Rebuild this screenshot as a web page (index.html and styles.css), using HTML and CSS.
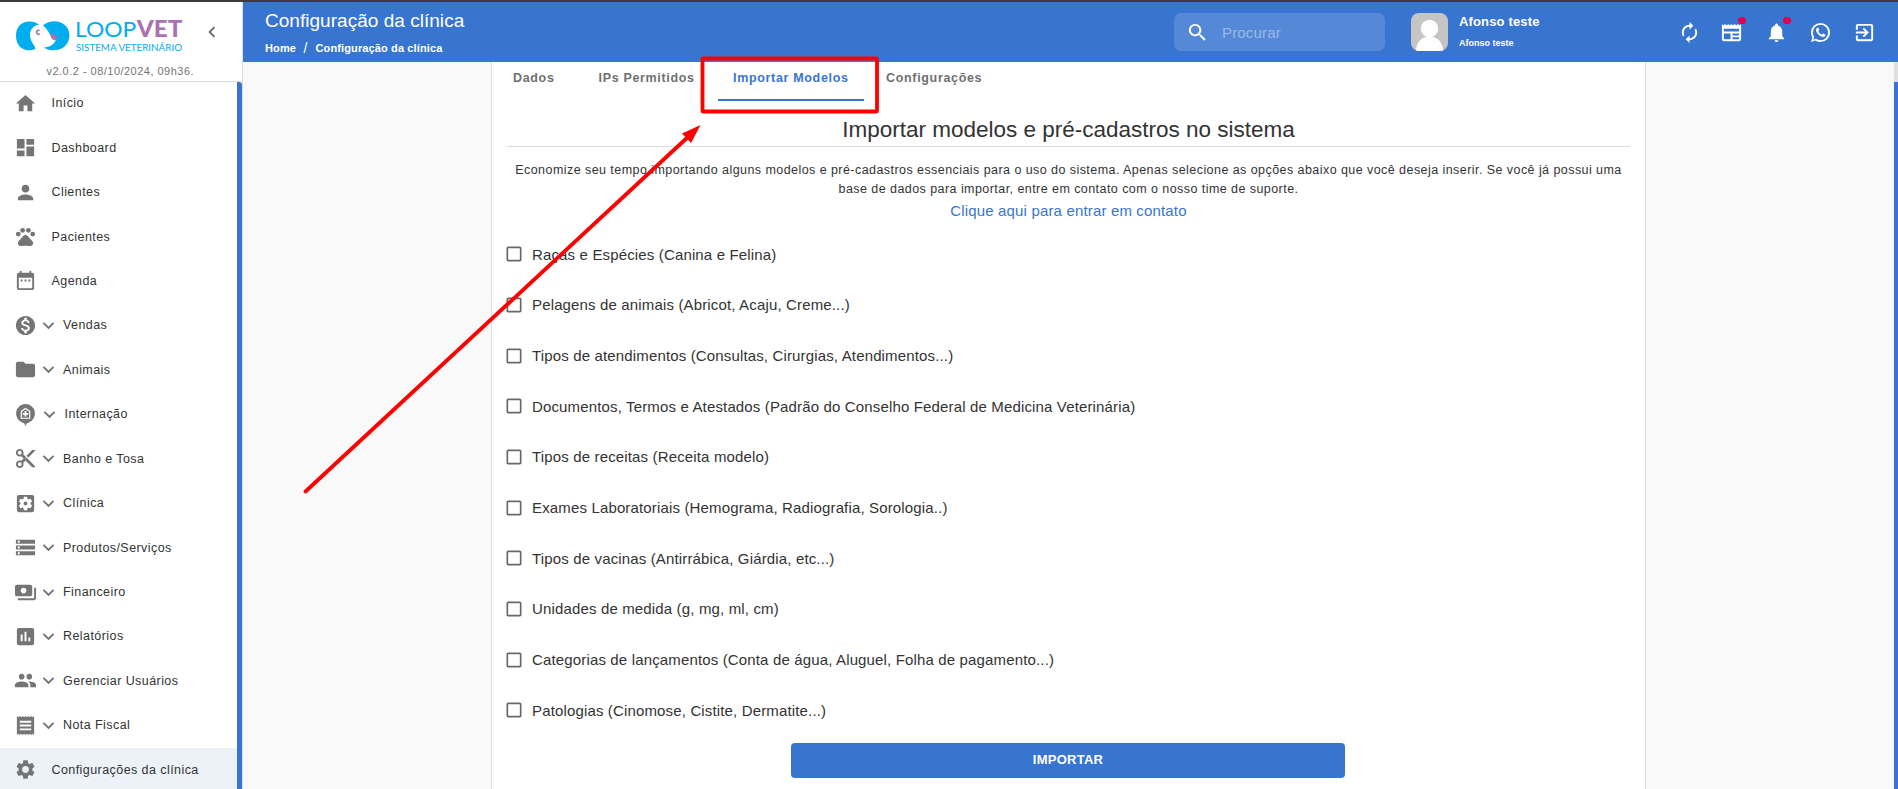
FILE: index.html
```html
<!DOCTYPE html>
<html lang="pt-BR">
<head>
<meta charset="utf-8">
<title>Configuração da clínica</title>
<link rel="stylesheet" href="styles.css">
</head>
<body>
<svg class="sprite" aria-hidden="true">
  <symbol id="chev" viewBox="0 0 24 24"><path d="M16.59 8.59 12 13.17 7.41 8.59 6 10l6 6 6-6z"/></symbol>
  <symbol id="check" viewBox="0 0 24 24"><path d="M19 5v14H5V5h14m0-2H5c-1.1 0-2 .9-2 2v14c0 1.1.9 2 2 2h14c1.1 0 2-.9 2-2V5c0-1.1-.9-2-2-2z"/></symbol>
</svg>
<div class="app">
  <aside class="sidebar">
    <div class="brand">
      <div class="brand-row">
        <svg class="logo" viewBox="48 30 504 135">
          <path fill="#00aeef" d="M118 74C98 57 48 59 48 107c0 41 36 50 58 40 2-8-14-19-16-40-1-18 10-32 28-33z"/>
          <path fill="#00aeef" d="M129 76c15-12 34-15 49-10 24 8 32 27 30 46-3 28-28 40-50 39-12-1-21-4-26-9 16 0 32-9 35-22-15-3-16-24-38-44z"/>
          <path fill="#aa72b0" d="M149 101c9 5 17 0 22 7 2 6-2 12-8 13-7-2-11-10-14-20z"/>
          <path fill="none" stroke="#aa72b0" stroke-width="5" d="M119 92c-4-3-9 0-9 5s5 8 9 4"/>
          <text class="logo-loop" x="225" y="112" textLength="184" lengthAdjust="spacingAndGlyphs">LOOP</text>
          <text class="logo-vet" x="410" y="112" textLength="137" lengthAdjust="spacingAndGlyphs">VET</text>
          <text class="logo-sub" x="228" y="153" textLength="318" lengthAdjust="spacingAndGlyphs">SISTEMA VETERINÁRIO</text>
        </svg>
        <svg class="collapse" viewBox="0 0 24 24"><path d="M15.41 7.41 14 6l-6 6 6 6 1.41-1.41L10.83 12z"/></svg>
      </div>
      <div class="version">v2.0.2 - 08/10/2024, 09h36.</div>
    </div>
    <nav class="menu">
      <a class="item"><svg class="ic" viewBox="0 0 24 24"><path d="M10 20v-6h4v6h5v-8h3L12 3 2 12h3v8z"/></svg><span class="label">Início</span></a>
      <a class="item"><svg class="ic" viewBox="0 0 24 24"><path d="M3 13h8V3H3v10zm0 8h8v-6H3v6zm10 0h8V11h-8v10zm0-18v6h8V3h-8z"/></svg><span class="label">Dashboard</span></a>
      <a class="item"><svg class="ic" viewBox="0 0 24 24"><path d="M12 12c2.21 0 4-1.79 4-4s-1.79-4-4-4-4 1.79-4 4 1.79 4 4 4zm0 2c-2.67 0-8 1.34-8 4v2h16v-2c0-2.66-5.33-4-8-4z"/></svg><span class="label">Clientes</span></a>
      <a class="item"><svg class="ic" viewBox="0 0 24 24"><circle cx="4.5" cy="9.5" r="2.5"/><circle cx="9" cy="5.5" r="2.5"/><circle cx="15" cy="5.5" r="2.5"/><circle cx="19.5" cy="9.5" r="2.5"/><path d="M17.34 14.86c-.87-1.02-1.6-1.89-2.48-2.91-.46-.54-1.05-1.08-1.75-1.32-.11-.04-.22-.07-.33-.09-.25-.04-.52-.04-.78-.04s-.53 0-.79.05c-.11.02-.22.05-.33.09-.7.24-1.28.78-1.75 1.32-.87 1.02-1.6 1.89-2.48 2.91-1.31 1.31-2.92 2.76-2.62 4.79.29 1.02 1.02 2.03 2.33 2.32.73.15 3.06-.44 5.54-.44h.18c2.48 0 4.81.58 5.54.44 1.31-.29 2.04-1.31 2.33-2.32.31-2.04-1.3-3.49-2.61-4.8z"/></svg><span class="label">Pacientes</span></a>
      <a class="item"><svg class="ic" viewBox="0 0 24 24"><path d="M9 11H7v2h2v-2zm4 0h-2v2h2v-2zm4 0h-2v2h2v-2zm2-7h-1V2h-2v2H8V2H6v2H5c-1.11 0-1.99.9-1.99 2L3 20c0 1.1.89 2 2 2h14c1.1 0 2-.9 2-2V6c0-1.1-.9-2-2-2zm0 16H5V9h14v11z"/></svg><span class="label">Agenda</span></a>
      <a class="item group"><svg class="ic" viewBox="0 0 24 24"><path d="M12 2C6.48 2 2 6.48 2 12s4.48 10 10 10 10-4.48 10-10S17.52 2 12 2zm1.41 16.09V20h-2.67v-1.93c-1.71-.36-3.16-1.46-3.27-3.4h1.96c.1 1.05.82 1.87 2.65 1.87 1.96 0 2.4-.98 2.4-1.59 0-.83-.44-1.61-2.67-2.14-2.48-.6-4.18-1.62-4.18-3.67 0-1.72 1.39-2.84 3.11-3.21V4h2.67v1.95c1.86.45 2.79 1.86 2.85 3.39H14.3c-.05-1.11-.64-1.87-2.22-1.87-1.5 0-2.4.68-2.4 1.64 0 .84.65 1.39 2.67 1.91s4.18 1.39 4.18 3.91c-.01 1.83-1.38 2.83-3.12 3.16z"/></svg><svg class="chev"><use href="#chev"/></svg><span class="label">Vendas</span></a>
      <a class="item group"><svg class="ic" viewBox="0 0 24 24"><path d="M10 4H4c-1.1 0-1.99.9-1.99 2L2 18c0 1.1.9 2 2 2h16c1.1 0 2-.9 2-2V8c0-1.1-.9-2-2-2h-8l-2-2z"/></svg><svg class="chev"><use href="#chev"/></svg><span class="label">Animais</span></a>
      <a class="item group wide"><svg class="ic" viewBox="0 0 24 24"><path fill-rule="evenodd" d="M12 1a10 10 0 0 0-3 19.5l1.6.6L12 24l1.4-2.9 1.6-.6A10 10 0 0 0 12 1zM7 8.400 12 5l5 3.400V16.500H7z"/><path d="M8.200 9 12 6.400 15.800 9v6.300H8.200z"/><path fill="#fff" d="M11.100 8.400h1.800v2h2v1.800h-2v2h-1.800v-2h-2v-1.800h2z"/></svg><svg class="chev"><use href="#chev"/></svg><span class="label">Internação</span></a>
      <a class="item group"><svg class="ic" viewBox="0 0 24 24"><path d="M9.64 7.64c.23-.5.36-1.05.36-1.64 0-2.21-1.79-4-4-4S2 3.790 2 6s1.790 4 4 4c.59 0 1.140-.13 1.640-.36L10 12l-2.360 2.360C7.140 14.130 6.590 14 6 14c-2.210 0-4 1.790-4 4s1.790 4 4 4 4-1.790 4-4c0-.59-.13-1.140-.36-1.640L12 14l7 7h3v-1L9.640 7.640zM6 8c-1.100 0-2-.89-2-2s.9-2 2-2 2 .89 2 2-.9 2-2 2zm0 12c-1.100 0-2-.89-2-2s.9-2 2-2 2 .89 2 2-.9 2-2 2zm6-7.500c-.28 0-.5-.22-.5-.5s.22-.5.5-.5.5.22.5.5-.22.5-.5.5zM19 3l-6 6 2 2 7-7V3z"/></svg><svg class="chev"><use href="#chev"/></svg><span class="label">Banho e Tosa</span></a>
      <a class="item group"><svg class="ic" viewBox="0 0 24 24"><path d="M12 10c-1.100 0-2 .9-2 2s.9 2 2 2 2-.9 2-2-.9-2-2-2zm7-7H5c-1.110 0-2 .9-2 2v14c0 1.100.89 2 2 2h14c1.110 0 2-.9 2-2V5c0-1.100-.89-2-2-2zm-1.750 9c0 .23-.02.46-.05.68l1.480 1.160c.13.11.17.3.08.45l-1.400 2.420c-.09.15-.27.21-.43.15l-1.740-.7c-.36.28-.76.51-1.180.69l-.26 1.850c-.03.17-.18.3-.35.3h-2.800c-.17 0-.32-.13-.35-.29l-.26-1.850c-.43-.18-.82-.41-1.180-.69l-1.740.7c-.16.06-.34 0-.43-.15l-1.400-2.420c-.09-.15-.05-.34.08-.45l1.480-1.160c-.03-.23-.05-.46-.05-.69 0-.23.02-.46.05-.68l-1.480-1.160c-.13-.11-.17-.3-.08-.45l1.400-2.420c.09-.15.27-.21.43-.15l1.740.7c.36-.28.76-.51 1.180-.69l.26-1.850c.03-.17.18-.3.35-.3h2.800c.17 0 .32.13.35.29l.26 1.850c.43.18.82.41 1.180.69l1.740-.7c.16-.06.34 0 .43.15l1.400 2.420c.09.15.05.34-.08.45l-1.480 1.160c.03.23.05.46.05.69z"/></svg><svg class="chev"><use href="#chev"/></svg><span class="label">Clínica</span></a>
      <a class="item group"><svg class="ic" viewBox="0 0 24 24"><path d="M2 20h20v-4H2v4zm2-3h2v2H4v-2zM2 4v4h20V4H2zm4 3H4V5h2v2zm-4 7h20v-4H2v4zm2-3h2v2H4v-2z"/></svg><svg class="chev"><use href="#chev"/></svg><span class="label">Produtos/Serviços</span></a>
      <a class="item group"><svg class="ic" viewBox="0 0 24 24"><path d="M19 14V6c0-1.100-.9-2-2-2H3c-1.100 0-2 .9-2 2v8c0 1.100.9 2 2 2h14c1.100 0 2-.9 2-2zm-9-1c-1.660 0-3-1.340-3-3s1.340-3 3-3 3 1.340 3 3-1.340 3-3 3zm13-6v11c0 1.100-.9 2-2 2H4v-2h17V7h2z"/></svg><svg class="chev"><use href="#chev"/></svg><span class="label">Financeiro</span></a>
      <a class="item group"><svg class="ic" viewBox="0 0 24 24"><path d="M19 3H5c-1.100 0-2 .9-2 2v14c0 1.100.9 2 2 2h14c1.100 0 2-.9 2-2V5c0-1.100-.9-2-2-2zM9 17H7v-7h2v7zm4 0h-2V7h2v10zm4 0h-2v-4h2v4z"/></svg><svg class="chev"><use href="#chev"/></svg><span class="label">Relatórios</span></a>
      <a class="item group"><svg class="ic" viewBox="0 0 24 24"><path d="M16 11c1.660 0 2.990-1.340 2.990-3S17.660 5 16 5c-1.660 0-3 1.340-3 3s1.340 3 3 3zm-8 0c1.660 0 2.990-1.340 2.990-3S9.660 5 8 5C6.340 5 5 6.340 5 8s1.340 3 3 3zm0 2c-2.330 0-7 1.170-7 3.500V19h14v-2.500c0-2.330-4.670-3.500-7-3.500zm8 0c-.29 0-.62.02-.97.05 1.160.84 1.970 1.970 1.970 3.450V19h6v-2.500c0-2.330-4.670-3.500-7-3.500z"/></svg><svg class="chev"><use href="#chev"/></svg><span class="label">Gerenciar Usuários</span></a>
      <a class="item group"><svg class="ic" viewBox="0 0 24 24"><path d="M18 17H6v-2h12v2zm0-4H6v-2h12v2zm0-4H6V7h12v2zM3 22l1.500-1.500L6 22l1.500-1.500L9 22l1.500-1.500L12 22l1.500-1.500L15 22l1.500-1.500L18 22l1.500-1.500L21 22V2l-1.500 1.500L18 2l-1.500 1.500L15 2l-1.500 1.500L12 2l-1.500 1.500L9 2 7.500 3.500 6 2 4.500 3.500 3 2v20z"/></svg><svg class="chev"><use href="#chev"/></svg><span class="label">Nota Fiscal</span></a>
      <a class="item active"><svg class="ic" viewBox="0 0 24 24"><path d="M19.14 12.940c.04-.3.06-.61.06-.94 0-.32-.02-.64-.07-.94l2.030-1.580c.18-.14.23-.41.12-.61l-1.920-3.320c-.12-.22-.37-.29-.59-.22l-2.390.96c-.5-.38-1.030-.7-1.620-.94l-.36-2.540c-.04-.24-.24-.41-.48-.41h-3.840c-.24 0-.43.17-.47.41l-.36 2.540c-.59.24-1.130.57-1.620.94l-2.390-.96c-.22-.08-.47 0-.59.22L2.740 8.870c-.12.21-.08.47.12.61l2.030 1.580c-.05.3-.09.63-.09.94s.02.64.07.94l-2.030 1.580c-.18.14-.23.41-.12.61l1.920 3.320c.12.22.37.29.59.22l2.390-.96c.5.38 1.030.7 1.620.94l.36 2.540c.05.24.24.41.48.41h3.840c.24 0 .44-.17.47-.41l.36-2.540c.59-.24 1.130-.56 1.620-.94l2.390.96c.22.08.47 0 .59-.22l1.920-3.320c.12-.22.07-.47-.12-.61l-2.010-1.580zM12 15.600c-1.980 0-3.600-1.620-3.600-3.600s1.620-3.600 3.600-3.600 3.600 1.620 3.600 3.600-1.620 3.600-3.600 3.600z"/></svg><span class="label">Configurações da clínica</span></a>
    </nav>
  </aside>

  <div class="main">
    <header class="topbar">
      <div class="heading">
        <div class="page-title">Configuração da clínica</div>
        <div class="crumbs"><span>Home</span><span class="slash">/</span><span>Configuração da clínica</span></div>
      </div>
      <div class="search">
        <svg viewBox="0 0 24 24"><path d="M15.500 14h-.79l-.28-.27C15.410 12.590 16 11.110 16 9.500 16 5.910 13.090 3 9.500 3S3 5.910 3 9.500 5.910 16 9.500 16c1.610 0 3.090-.59 4.230-1.570l.27.28v.79l5 4.990L20.490 19l-4.990-5zm-6 0C7.010 14 5 11.990 5 9.500S7.010 5 9.500 5 14 7.010 14 9.500 11.990 14 9.500 14z"/></svg>
        <span>Procurar</span>
      </div>
      <svg class="avatar" viewBox="0 0 37 38"><rect width="37" height="38" fill="#c5c5c5"/><circle cx="18.500" cy="15.500" r="8.700" fill="#fff"/><path fill="#fff" d="M5 38c0-8 5-14.500 13.500-14.500S32 30 32 38z"/></svg>
      <div class="user"><div class="user-name">Afonso teste</div><div class="user-sub">Afonso teste</div></div>
      <div class="actions">
        <span class="act"><svg viewBox="0 0 24 24"><path d="M12 6v3l4-4-4-4v3c-4.420 0-8 3.580-8 8 0 1.570.46 3.030 1.240 4.260L6.700 14.800c-.45-.83-.7-1.790-.7-2.800 0-3.310 2.690-6 6-6zm6.760 1.740L17.300 9.200c.44.84.7 1.790.7 2.800 0 3.310-2.690 6-6 6v-3l-4 4 4 4v-3c4.420 0 8-3.580 8-8 0-1.570-.46-3.030-1.240-4.260z"/></svg></span>
        <span class="act"><svg viewBox="0 0 24 24"><path d="m22 3-1.670 1.670L18.670 3 17 4.670 15.330 3l-1.660 1.670L12 3l-1.670 1.670L8.670 3 7 4.670 5.330 3 3.670 4.670 2 3v16c0 1.100.9 2 2 2h16c1.100 0 2-.9 2-2V3zM11 19H4v-6h7v6zm9 0h-7v-2h7v2zm0-4h-7v-2h7v2zm0-4H4V8h16v3z"/></svg><i class="dot"></i></span>
        <span class="act"><svg viewBox="0 0 24 24"><path d="M12 22c1.100 0 2-.9 2-2h-4c0 1.100.89 2 2 2zm6-6v-5c0-3.070-1.640-5.640-4.500-6.320V4c0-.83-.67-1.500-1.500-1.500s-1.500.67-1.500 1.500v.68C7.630 5.360 6 7.920 6 11v5l-2 2v1h16v-1l-2-2z"/></svg><i class="dot"></i></span>
        <span class="act"><svg viewBox="0 0 24 24"><path d="M16.750 13.960c.25.13.41.2.46.3.06.11.04.61-.21 1.180-.2.56-1.240 1.100-1.700 1.120-.46.02-.47.36-2.960-.73-2.490-1.090-3.990-3.750-4.110-3.920-.12-.17-.96-1.380-.92-2.610.05-1.220.69-1.800.95-2.040.24-.26.51-.29.68-.26h.47c.15 0 .36-.06.55.45l.69 1.870c.06.13.1.28.01.44l-.27.41-.39.42c-.12.12-.26.25-.12.5.12.26.62 1.090 1.320 1.780.91.88 1.710 1.170 1.950 1.300.24.14.39.12.54-.04l.81-.94c.19-.25.35-.19.58-.11l1.670.88M12 2a10 10 0 0 1 10 10 10 10 0 0 1-10 10c-1.970 0-3.800-.57-5.350-1.550L2 22l1.550-4.650A9.969 9.969 0 0 1 2 12 10 10 0 0 1 12 2m0 2a8 8 0 0 0-8 8c0 1.720.54 3.310 1.460 4.610L4.500 19.500l2.890-.96A7.950 7.950 0 0 0 12 20a8 8 0 0 0 8-8 8 8 0 0 0-8-8z"/></svg></span>
        <span class="act"><svg viewBox="0 0 24 24"><path d="M10.090 15.590 11.500 17l5-5-5-5-1.410 1.410L12.670 11H3v2h9.670l-2.580 2.590zM19 3H5c-1.110 0-2 .9-2 2v4h2V5h14v14H5v-4H3v4c0 1.100.89 2 2 2h14c1.100 0 2-.9 2-2V5c0-1.100-.9-2-2-2z"/></svg></span>
      </div>
    </header>

    <div class="content">
      <section class="card">
        <div class="tabs">
          <span class="tab t1">Dados</span><span class="tab t2">IPs Permitidos</span><span class="tab t3 selected">Importar Modelos</span><span class="tab t4">Configurações</span>
        </div>
        <h1 class="title">Importar modelos e pré-cadastros no sistema</h1>
        <p class="desc">Economize seu tempo importando alguns modelos e pré-cadastros essenciais para o uso do sistema. Apenas selecione as opções abaixo que você deseja inserir. Se você já possui uma<br>base de dados para importar, entre em contato com o nosso time de suporte.</p>
        <a class="link">Clique aqui para entrar em contato</a>
        <div class="options">
          <label class="opt"><svg><use href="#check"/></svg>Raças e Espécies (Canina e Felina)</label>
          <label class="opt"><svg><use href="#check"/></svg>Pelagens de animais (Abricot, Acaju, Creme...)</label>
          <label class="opt"><svg><use href="#check"/></svg>Tipos de atendimentos (Consultas, Cirurgias, Atendimentos...)</label>
          <label class="opt"><svg><use href="#check"/></svg>Documentos, Termos e Atestados (Padrão do Conselho Federal de Medicina Veterinária)</label>
          <label class="opt"><svg><use href="#check"/></svg>Tipos de receitas (Receita modelo)</label>
          <label class="opt"><svg><use href="#check"/></svg>Exames Laboratoriais (Hemograma, Radiografia, Sorologia..)</label>
          <label class="opt"><svg><use href="#check"/></svg>Tipos de vacinas (Antirrábica, Giárdia, etc...)</label>
          <label class="opt"><svg><use href="#check"/></svg>Unidades de medida (g, mg, ml, cm)</label>
          <label class="opt"><svg><use href="#check"/></svg>Categorias de lançamentos (Conta de água, Aluguel, Folha de pagamento...)</label>
          <label class="opt"><svg><use href="#check"/></svg>Patologias (Cinomose, Cistite, Dermatite...)</label>
        </div>
        <button class="import">IMPORTAR</button>
      </section>
      <div class="scroll"></div>
    </div>
  </div>
</div>
<svg class="annotation" viewBox="0 0 1898 789">
  <rect x="702.500" y="58.500" width="174.500" height="53" rx="1"/>
  <path class="shaft" d="M305.500 491.500 689 136"/>
  <path class="head" d="M700.500 125 682 133.500 691 143z"/>
</svg>
</body>
</html>
```
FILE: styles.css
```css
* { box-sizing: border-box; }
body {
  margin: 0;
  height: 789px;
  overflow: hidden;
  font-family: "Liberation Sans", Arial, sans-serif;
  color: #333;
  background: #f9f9f9;
}
svg { display: block; flex: none; }
.sprite { position: absolute; width: 0; height: 0; }
.app { display: flex; height: 789px; border-top: 2px solid #3c3c3c; }

.sidebar {
  width: 243px;
  flex: none;
  display: flex;
  flex-direction: column;
  background: #fff;
  border-right: 1px solid #ddd;
}
.brand { height: 80px; flex: none; border-bottom: 1px solid #dcdcdc; }
.brand-row { display: flex; padding: 8px 0 0 16px; height: 61px; }
.logo { width: 168px; height: 45px; }
.logo-loop { font: 400 66px Lato, sans-serif; fill: #00aeef; }
.logo-vet { font: 900 66px Lato, sans-serif; fill: #aa72b0; }
.logo-sub { font: 400 27px Lato, sans-serif; fill: #00aeef; }
.collapse { width: 22px; height: 22px; margin: 11px 0 0 17px; fill: #666; }
.version {
  padding-left: 46.500px;
  font-size: 11px;
  line-height: 16px;
  letter-spacing: .48px;
  color: #757575;
}
.menu { flex: 1; min-height: 0; overflow: hidden; border-right: 5px solid #3875d1; border-top-right-radius: 3px; }
.item {
  display: flex;
  align-items: center;
  height: 44.450px;
  padding-left: 14px;
  font-size: 12.500px;
  letter-spacing: .43px;
}
.item:first-child { margin-top: -1px; }
.item .label { padding-left: 14.500px; }
.ic { width: 23px; height: 23px; fill: #757575; }
.chev { width: 23px; height: 23px; fill: #757575; }
.item.group .label { padding-left: 3px; }
.item.wide .ic { margin-right: 1px; }
.item.wide .label { padding-left: 3.500px; }
.item.active { background: #edf2f9; }

.main { flex: 1; min-width: 0; display: flex; flex-direction: column; }
.topbar {
  height: 60px;
  flex: none;
  display: flex;
  padding: 11px 22px 0 22px;
  background: #3875d1;
  color: #fff;
}
.heading { width: 909px; margin-top: -4px; }
.page-title { font-size: 19px; line-height: 24px; letter-spacing: .03px; }
.crumbs { display: flex; align-items: center; margin-top: 5px; height: 20px; font-size: 11px; font-weight: 700; letter-spacing: .12px; }
.slash { width: 19.500px; padding-left: 7.500px; font-size: 14px; font-weight: 400; }
.search {
  width: 211px;
  height: 38px;
  display: flex;
  align-items: center;
  padding-left: 12px;
  border-radius: 7px;
  background: rgba(255, 255, 255, .15);
}
.search svg { width: 23px; height: 23px; fill: #fff; }
.search span { padding-left: 13px; font-size: 15px; letter-spacing: .16px; color: rgba(255, 255, 255, .42); }
.avatar { width: 37px; height: 38px; margin-left: 26px; border-radius: 8px; }
.user { margin-left: 11px; width: 219px; font-weight: 700; }
.user-name { font-size: 13px; line-height: 18px; letter-spacing: .15px; }
.user-sub { font-size: 9px; line-height: 14px; margin-top: 5px; }
.actions { display: flex; margin-top: 8px; gap: 22px; }
.act { position: relative; width: 22px; height: 22px; }
.act:nth-child(2) { margin-right: 1px; margin-left: -2px; }
.act svg { width: 23px; height: 23px; fill: #fff; }
.dot { position: absolute; right: -4px; top: -4px; width: 8px; height: 7px; border-radius: 4px; background: #dc004e; }

.content { flex: 1; min-height: 0; display: flex; justify-content: space-between; overflow: hidden; }
.card {
  width: 1155px;
  margin-left: 248px;
  padding: 0 15px;
  background: #fff;
  border: solid #ddd;
  border-width: 0 1px;
  text-align: center;
}
.scroll { width: 4px; background: #3875d1; border-top: 20px solid #e0e0e0; }
.tabs { display: flex; height: 39px; font-size: 12.500px; font-weight: 700; letter-spacing: .67px; line-height: 32px; color: #707070; text-align: left; }
.t1 { width: 85.500px; margin-left: 6px; }
.t2 { width: 119.500px; }
.t3 { width: 146px; padding-left: 15px; margin-right: 22px; }
.selected { color: #3875d1; border-bottom: 2px solid #3875d1; }
.title { margin: 0; height: 46px; padding-top: 15px; font-size: 22.500px; font-weight: 400; line-height: 27px; border-bottom: 1px solid #dcdcdc; }
.desc { margin: 14px 0 0; font-size: 12.500px; letter-spacing: .44px; line-height: 19px; white-space: nowrap; }
.link { display: block; padding-top: 1px; font-size: 15px; letter-spacing: .16px; line-height: 22px; color: #3875d1; }
.options { margin-top: 7px; text-align: left; }
.opt { display: flex; align-items: center; height: 50.670px; font-size: 15px; letter-spacing: .15px; }
.opt svg { width: 20px; height: 20px; fill: #686868; margin: 0 8px 0 -3px; }
.import {
  display: block;
  width: 554px;
  height: 35px;
  margin: 7px 0 0 284px;
  border: 0;
  border-radius: 4px;
  padding: 0 0 2px;
  background: #3875d1;
  color: #fff;
  font: 700 13px "Liberation Sans", Arial, sans-serif;
  letter-spacing: .25px;
}
.annotation { position: absolute; left: 0; top: 0; width: 1898px; height: 789px; pointer-events: none; fill: none; stroke: #f00; stroke-width: 3.800; stroke-linecap: round; }
.annotation .head { fill: #f00; stroke: none; }
```
